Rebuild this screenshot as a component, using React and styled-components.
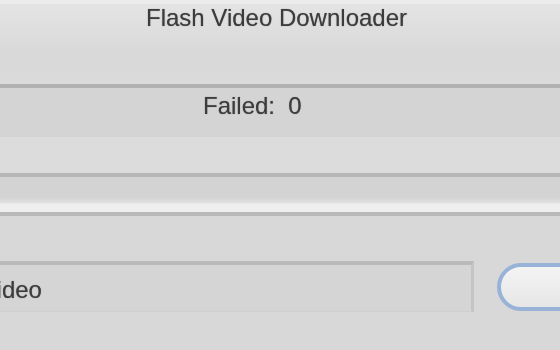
import styled, { createGlobalStyle } from "styled-components";

const GlobalStyle = createGlobalStyle`
  html, body {
    margin: 0;
    padding: 0;
    width: 560px;
    height: 350px;
    overflow: hidden;
    background: #d8d8d8;
    font-family: "Liberation Sans", Arial, sans-serif;
  }
`;

export default function App() {
  return (
    <>
      <GlobalStyle />
      <Janela>
        <BarraTitulo>
          <Texto>Flash Video Downloader</Texto>
        </BarraTitulo>
        <Divisor />
        <BarraStatus>
          <Texto>Failed:&nbsp; 0</Texto>
        </BarraStatus>
        <Faixa />
        <Divisor $cor="#b6b6b6" />
        <FaixaBrilho />
        <Divisor $cor="#b9b9b9" />
        <PainelInferior>
          <Campo>
            <Texto>Video</Texto>
          </Campo>
          <BotaoAqua />
        </PainelInferior>
      </Janela>
    </>
  );
}

const Janela = styled.div`
  width: 560px;
  height: 350px;
  display: flex;
  flex-direction: column;
  background: #d8d8d8;
  overflow: hidden;
`;

const BarraTitulo = styled.div`
  height: 84px;
  box-sizing: border-box;
  padding: 0 7px 0 0;
  display: flex;
  justify-content: center;
  align-items: flex-start;
  border-top: 4px solid #ececec;
  background: linear-gradient(#e4e4e4, #d9d9d9 60%, #dadada);
`;

const Texto = styled.span`
  display: inline-block;
  font-size: 24px;
  line-height: 28px;
  color: #3c3c3c;
  text-shadow: 0 0 1px rgba(60, 60, 60, 0.6);
  filter: blur(0.6px);
`;

const Divisor = styled.div`
  height: 4px;
  flex-shrink: 0;
  background: ${(p) => p.$cor || "#b1b1b1"};
`;

const BarraStatus = styled.div`
  height: 49px;
  box-sizing: border-box;
  padding: 4px 0 0 203px;
  background: #d4d4d4;
`;

const Faixa = styled.div`
  height: 36px;
  background: #dcdcdc;
`;

const FaixaBrilho = styled.div`
  height: 35px;
  background: linear-gradient(
    #d3d3d3 0,
    #d3d3d3 21px,
    #e2e2e2 26px,
    #eeeeee 27px,
    #efefef 100%
  );
`;

const PainelInferior = styled.div`
  flex: 1;
  display: flex;
  align-items: flex-start;
  gap: 23px;
  padding-top: 45px;
  background: #d8d8d8;
`;

const Campo = styled.div`
  width: 514px;
  height: 51px;
  margin-left: -40px;
  box-sizing: border-box;
  flex-shrink: 0;
  border-top: 4px solid #bababa;
  border-right: 3px solid #c4c4c4;
  border-bottom: 1px solid #cfcfcf;
  background: #d5d5d5;
  display: flex;
  align-items: center;
  padding: 4px 0 0 21px;
`;

const BotaoAqua = styled.div`
  width: 120px;
  height: 48px;
  margin-top: 2px;
  flex-shrink: 0;
  box-sizing: border-box;
  border-radius: 24px;
  border: 4px solid #98b2d8;
  background: linear-gradient(#f4f4f4, #e6e6e6);
  filter: blur(0.6px);
`;
